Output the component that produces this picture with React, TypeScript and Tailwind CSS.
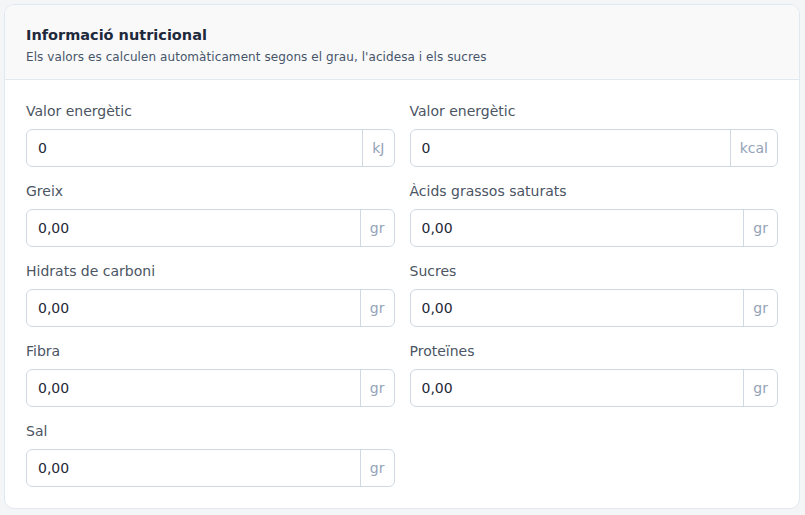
import React from 'react';

type Field = { label: string; value: string; unit: string };

const fields: Field[] = [
  { label: 'Valor energètic', value: '0', unit: 'kJ' },
  { label: 'Valor energètic', value: '0', unit: 'kcal' },
  { label: 'Greix', value: '0,00', unit: 'gr' },
  { label: 'Àcids grassos saturats', value: '0,00', unit: 'gr' },
  { label: 'Hidrats de carboni', value: '0,00', unit: 'gr' },
  { label: 'Sucres', value: '0,00', unit: 'gr' },
  { label: 'Fibra', value: '0,00', unit: 'gr' },
  { label: 'Proteïnes', value: '0,00', unit: 'gr' },
  { label: 'Sal', value: '0,00', unit: 'gr' },
];

const UnitInput: React.FC<Field> = ({ label, value, unit }) => (
  <div className="flex flex-col">
    <label className="text-[14px] leading-[20px] text-[#4b5563] mb-[8px]">{label}</label>
    <div className="flex h-[38px] rounded-[6px] border border-[#cfd8e3] bg-white overflow-hidden">
      <input
        defaultValue={value}
        className="flex-1 min-w-0 px-[11px] text-[14px] text-[#1f2937] outline-none bg-transparent"
      />
      <span className="flex items-center px-[9px] border-l border-[#cfd8e3] text-[14px] text-[#94a3b8]">{unit}</span>
    </div>
  </div>
);

export default function App() {
  return (
    <div
      className="min-h-[515px] bg-[#f4f5f7] pt-[4px] pl-[4px] pr-[5px]"
      style={{ fontFamily: '"DejaVu Sans", "Open Sans", sans-serif' }}
    >
      <div className="rounded-[10px] border border-[#e2e8f0] bg-white overflow-hidden">
        <div className="bg-[#f9f9fa] border-b border-[#e2e8f0] px-[21px] pt-[20px] pb-[13px]">
          <h2 className="text-[14.5px] leading-[20px] font-semibold text-[#1e293b]">Informació nutricional</h2>
          <p className="text-[12px] leading-[18px] mt-[3px] tracking-[0.08px] text-[#475569]">
            Els valors es calculen automàticament segons el grau, l'acidesa i els sucres
          </p>
        </div>
        <div className="grid grid-cols-2 gap-x-[15px] gap-y-[14px] px-[21px] pt-[21px] pb-[21px]">
          {fields.map((f, i) => (
            <UnitInput key={i} {...f} />
          ))}
        </div>
      </div>
    </div>
  );
}
